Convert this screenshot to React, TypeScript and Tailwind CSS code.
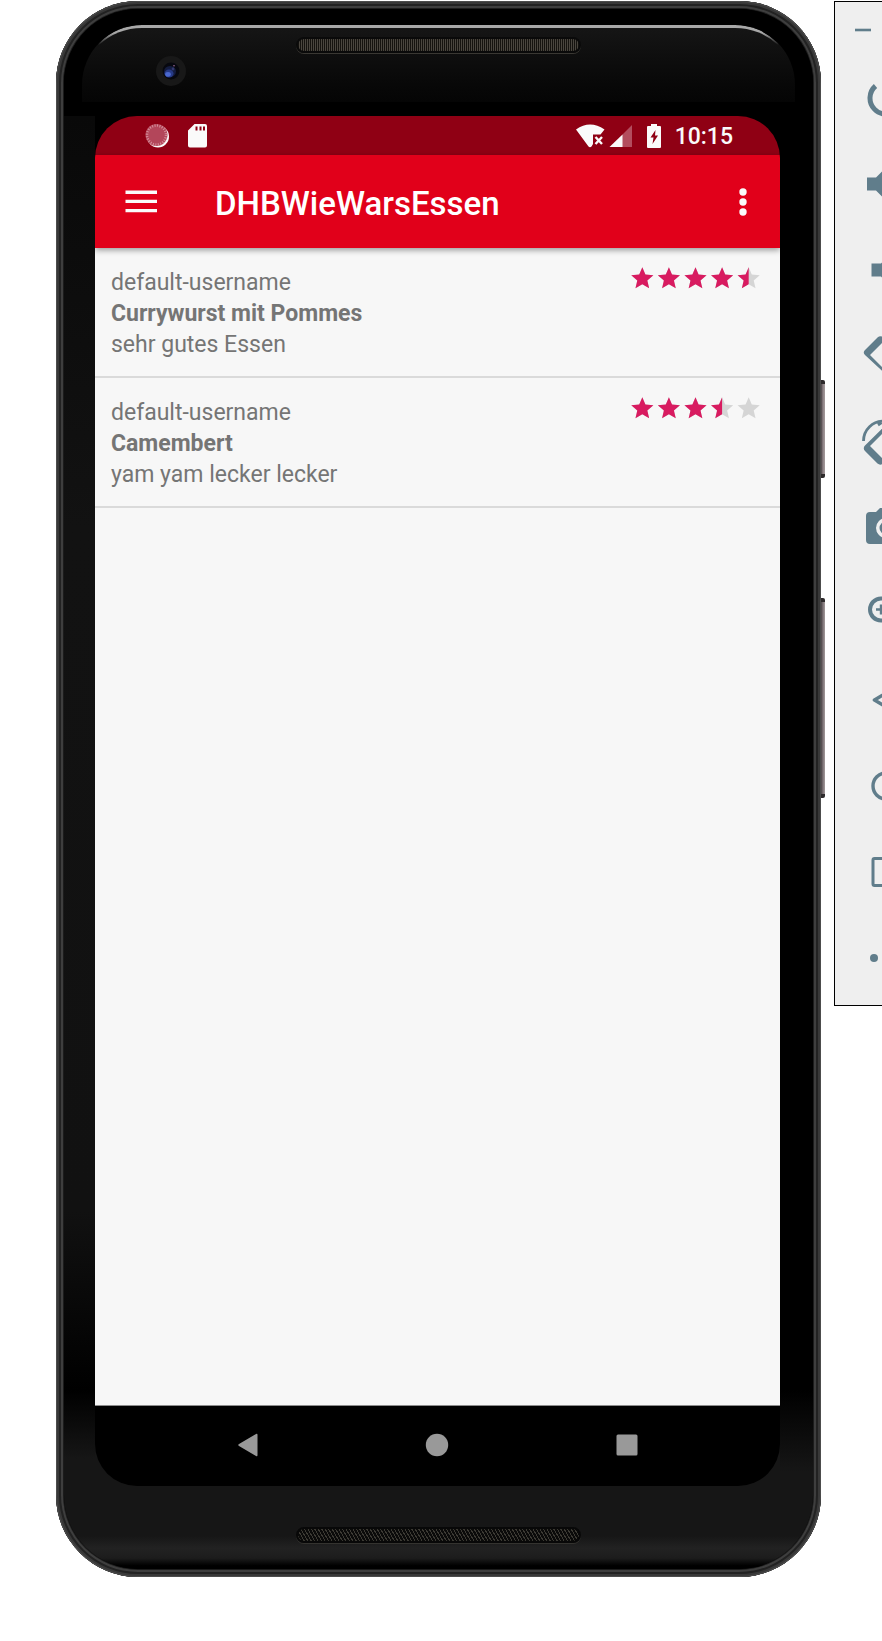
import type { ReactNode } from "react";

type Review = { user: string; dish: string; comment: string; rating: number };

const reviews: Review[] = [
  { user: "default-username", dish: "Currywurst mit Pommes", comment: "sehr gutes Essen", rating: 4.5 },
  { user: "default-username", dish: "Camembert", comment: "yam yam lecker lecker", rating: 3.5 },
];

const STAR = "M12 17.27L18.18 21l-1.64-7.03L22 9.24l-7.19-.61L12 2 9.19 8.63 2 9.24l5.46 4.73L5.82 21z";

function Stars({ rating, id }: { rating: number; id: string }) {
  const row = [0, 1, 2, 3, 4].map((i) => <path key={i} d={STAR} transform={`translate(${i * 24} 0)`} />);
  return (
    <svg viewBox="0 0 120 24" className="w-[133px] shrink-0" role="img" aria-label={`${rating} / 5`}>
      <clipPath id={id}>
        <rect width={rating * 24} height="24" />
      </clipPath>
      <g fill="#d5d5d5">{row}</g>
      <g fill="#d81b60" clipPath={`url(#${id})`}>{row}</g>
    </svg>
  );
}

function StatusBar() {
  return (
    <div className="flex h-[39px] items-center bg-[#8f0014] pr-[47px] pl-[50px] text-[#fafafa]">
      <svg viewBox="0 0 24 24" className="mr-[18px] size-6" aria-hidden="true">
        <circle cx="13" cy="12.500" r="11" fill="#fafafa" />
        <circle cx="11.500" cy="11" r="11" fill="#b3465a" />
        <circle cx="11.500" cy="11" r="9.500" fill="none" stroke="#d58f9b" strokeWidth="2.500" strokeDasharray="1 1.500" />
      </svg>
      <svg viewBox="0 0 20 24" className="h-6 w-5" aria-hidden="true">
        <path
          fill="currentColor"
          fillRule="evenodd"
          d="M7.500 0H18Q20 0 20 2V21.500Q20 23.500 18 23.500H3Q1 23.500 1 21.500V6.500ZM8.500 2.500V6.500H10.500V2.500ZM12.500 2.500V6.500H14.500V2.500ZM16 2.500V6.500H18V2.500Z"
        />
      </svg>
      <div className="ml-auto flex items-center">
        <svg viewBox="0 0 29 24" className="h-6 w-[29px]" aria-hidden="true">
          <path fill="currentColor" d="M0 5.500Q14 -4.500 28.500 5.500L24.500 10.500H17V20L15.500 22.500Q14 24 12.500 22.500Z" />
          <path d="M19.500 13l6.500 7M26 13l-6.500 7" stroke="currentColor" strokeWidth="2.400" />
        </svg>
        <svg viewBox="0 0 24 24" className="ml-1 size-6" aria-hidden="true">
          <path fill="#b34d5e" d="M23 1V23H13V11Z" />
          <path fill="currentColor" d="M13.500 10.500V23H0.500Z" />
        </svg>
        <svg viewBox="0 0 14 24" className="ml-[14px] h-6 w-[14px]" aria-hidden="true">
          <path
            fill="currentColor"
            fillRule="evenodd"
            d="M4 0H10V2H13Q14 2 14 3V23Q14 24 13 24H1Q0 24 0 23V3Q0 2 1 2H4ZM8.500 6L3.500 13.500H6.500L5.500 20L11 11.500H8Z"
          />
        </svg>
        <span className="ml-[14px] pt-0.5 text-[23px] leading-none font-medium">10:15</span>
      </div>
    </div>
  );
}

function AppBar() {
  return (
    <header className="relative z-10 flex h-[93px] items-center bg-[#e1001a] pr-[25px] pl-[30px] text-white shadow-[0_2px_6px_rgba(0,0,0,0.4)]">
      <button type="button" aria-label="Menu">
        <svg viewBox="0 0 32 24" className="h-6 w-8" aria-hidden="true">
          <path d="M0.500 2.200H32M0.500 11.400H32M0.500 20.600H32" stroke="#fafafa" strokeWidth="3.400" />
        </svg>
      </button>
      <h1 className="ml-[58px] pt-1 text-[33px] leading-[40px] font-medium">DHBWieWarsEssen</h1>
      <button type="button" aria-label="More options" className="ml-auto">
        <svg viewBox="0 0 24 28" className="h-7 w-6" aria-hidden="true" fill="#fafafa">
          <circle cx="12" cy="4" r="3.700" />
          <circle cx="12" cy="14" r="3.700" />
          <circle cx="12" cy="24" r="3.700" />
        </svg>
      </button>
    </header>
  );
}

function ReviewRow({ review, id }: { review: Review; id: string }) {
  return (
    <li className="flex items-start justify-between border-b-2 border-[#dadada] pt-[17px] pr-[18px] pb-4 pl-4 text-[23px] leading-[31px] text-[#757575]">
      <div className="pt-0.5">
        <p>{review.user}</p>
        <p className="font-bold">{review.dish}</p>
        <p>{review.comment}</p>
      </div>
      <Stars rating={review.rating} id={id} />
    </li>
  );
}

function NavBar() {
  return (
    <nav className="grid h-[81px] grid-cols-3 items-center justify-items-center border-t border-[#8c8c8c] bg-black px-[58px] pb-0.5">
      <button type="button" aria-label="Back">
        <svg viewBox="0 0 24 24" className="size-6" fill="#999" aria-hidden="true">
          <path d="M20 1Q21.500 0 21.500 2V22Q21.500 24 20 23L3 13Q1.500 12 3 11Z" />
        </svg>
      </button>
      <button type="button" aria-label="Home">
        <svg viewBox="0 0 24 24" className="size-6" fill="#999" aria-hidden="true">
          <circle cx="12" cy="12" r="11.200" />
        </svg>
      </button>
      <button type="button" aria-label="Overview">
        <svg viewBox="0 0 24 24" className="size-6" fill="#999" aria-hidden="true">
          <rect x="1.500" y="1.500" width="21" height="21" rx="1.500" />
        </svg>
      </button>
    </nav>
  );
}

const mesh =
  "bg-[repeating-linear-gradient(90deg,#15130f_0_1px,#4a463f_1px_2px),repeating-linear-gradient(0deg,#2a2824_0_1px,#3d3a34_1px_2px)]";
const darkMesh =
  "bg-[repeating-linear-gradient(60deg,#0b0b0a_0_2px,#3c3a33_2px_3px)]";

function Phone() {
  return (
    <div className="relative flex min-w-0 flex-1 flex-col rounded-[82px] bg-[#1c1c1c] p-2 shadow-[inset_0_0_0_1px_#4c4c4c,inset_0_0_0_3px_#383838,inset_0_0_0_5px_#222,inset_0_0_0_7px_#3e3e3e]">
      <div className="flex flex-1 flex-col overflow-hidden rounded-[74px] bg-black">
        <div className="relative h-[107px] shrink-0 bg-black">
          <div className="absolute inset-x-[18px] top-4 bottom-[14px] rounded-t-[60px] bg-linear-to-b from-[#161616] to-[#050505]" />
          <div className="absolute inset-x-[18px] top-4 bottom-[14px] rounded-t-[60px] border-t-[3px] border-[#a8a8a8] mask-[linear-gradient(#000_8px,transparent_20px)]" />
          <div className="relative pt-7">
            <div className={`mx-auto h-4 w-[38%] rounded-full border-2 border-[#0a0a0a] shadow-[0_1px_0_#3a3833] ${mesh}`} />
            <div className="mt-[3px] ml-[92px] grid size-[30px] place-items-center rounded-full bg-[#181818]">
              <svg viewBox="0 0 18 18" className="size-[18px]" aria-hidden="true">
                <circle cx="9" cy="9" r="8.500" fill="#07080f" />
                <ellipse cx="8" cy="9.500" rx="6" ry="5.500" fill="#141c40" />
                <ellipse cx="7" cy="11.500" rx="4.500" ry="4" fill="#263a86" />
                <ellipse cx="6" cy="12.300" rx="2.800" ry="2.400" fill="#4a68cf" />
                <circle cx="11" cy="7" r="1.400" fill="#33386e" />
                <circle cx="12" cy="3.800" r="0.800" fill="#a06a9a" />
              </svg>
            </div>
          </div>
        </div>
        <div className="flex flex-1 bg-linear-to-b from-black from-90% to-[#161616] to-97%">
          <div className="w-[31px] shrink-0 bg-[linear-gradient(#090909,#121212_30%,#111_80%,#000_93%,#161616_98%)]" />
          <div className="flex min-w-0 flex-1 flex-col overflow-hidden rounded-[42px]">
            <StatusBar />
            <AppBar />
            <ul className="flex-1 bg-[#f7f7f7]">
              {reviews.map((review, i) => (
                <ReviewRow key={review.dish} review={review} id={`rating-${i}`} />
              ))}
            </ul>
            <NavBar />
          </div>
          <div className="w-[33px] shrink-0 bg-[linear-gradient(#000_93%,#161616_99%)]" />
        </div>
        <div className="h-[83px] shrink-0 bg-[linear-gradient(#161616_60%,#222_75%,#1c1c1c_87%,#000_96%)] pt-[41px]">
          <div className={`mx-auto h-4 w-[38%] rounded-full border-2 border-[#080808] shadow-[0_1px_0_#34332f] ${darkMesh}`} />
        </div>
      </div>
      <div className="absolute top-[379px] left-full h-[98px] w-1 rounded-r-xs border-y-4 border-[#2d2a2b] bg-linear-to-r from-[#4a4346] via-[#8d8285] to-[#a59b9c]" />
      <div className="absolute top-[597px] left-full h-[200px] w-1 rounded-r-xs border-y-4 border-[#2d2a2b] bg-linear-to-r from-[#4a4346] via-[#7d7477] to-[#a59b9c]" />
    </div>
  );
}

const tools: { label: string; art: ReactNode }[] = [
  {
    label: "Power",
    art: <path d="M13.500 12A16 16 0 1 0 34.500 12M24 5V24" fill="none" stroke="currentColor" strokeWidth="5" />,
  },
  {
    label: "Volume up",
    art: (
      <>
        <path d="M5 17.500H14L24 7.500V40.500L14 30.500H5Z" fill="currentColor" />
        <path d="M29 15Q36 24 29 33M30 8Q46 24 30 40" fill="none" stroke="currentColor" strokeWidth="4" />
      </>
    ),
  },
  {
    label: "Volume down",
    art: (
      <>
        <path d="M9.500 17.500H19L28 8.500V39.500L19 30.500H9.500Z" fill="currentColor" />
        <path d="M33 15Q40 24 33 33" fill="none" stroke="currentColor" strokeWidth="4" />
      </>
    ),
  },
  {
    label: "Rotate left",
    art: (
      <path
        fill="currentColor"
        fillRule="evenodd"
        d="M15.500 5.500Q18.500 3 21.500 5.500L45 29Q47 31 45 33L32 46Q30 48 28 46L3 23Q0.500 20.500 3 18ZM8 23L26 41L40.500 26.500L22.500 8.500Z"
      />
    ),
  },
  {
    label: "Rotate right",
    art: (
      <>
        <path
          fill="currentColor"
          fillRule="evenodd"
          d="M28 3Q30 1 32 3L45 16Q47 18 45 20L21.500 45Q18.500 48 15.500 45.500L3 33Q0.500 30 3 27.500ZM8 28L22 42L40.500 23L26.500 9.500Z"
        />
        <path d="M1.500 23A20 20 0 0 1 22 3L16 7" fill="none" stroke="currentColor" strokeWidth="2.800" />
      </>
    ),
  },
  {
    label: "Screenshot",
    art: (
      <path
        fill="currentColor"
        fillRule="evenodd"
        d="M8 8H14L18 4H30L34 8H40Q44 8 44 12V36Q44 40 40 40H8Q4 40 4 36V12Q4 8 8 8ZM24 14A10 10 0 1 0 24 34A10 10 0 1 0 24 14ZM24 17.500A6.500 6.500 0 1 1 24 30.500A6.500 6.500 0 1 1 24 17.500Z"
      />
    ),
  },
  {
    label: "Zoom",
    art: (
      <g fill="none" stroke="currentColor">
        <circle cx="19" cy="19.500" r="11" strokeWidth="4" />
        <path d="M14 19.500H24M19 14.500V24.500" strokeWidth="2.400" />
        <path d="M28 28.500L39 39.500" strokeWidth="5" />
      </g>
    ),
  },
  {
    label: "Back",
    art: <path d="M12.500 24L35 10.500V37.500Z" fill="none" stroke="currentColor" strokeWidth="3.600" strokeLinejoin="round" />,
  },
  {
    label: "Home",
    art: <circle cx="24" cy="24" r="13" fill="none" stroke="currentColor" strokeWidth="3.400" />,
  },
  {
    label: "Overview",
    art: <rect x="11" y="10.500" width="27" height="27" rx="1.500" fill="none" stroke="currentColor" strokeWidth="3" />,
  },
  {
    label: "More",
    art: (
      <g fill="currentColor">
        <circle cx="12" cy="24" r="4" />
        <circle cx="25" cy="24" r="4" />
        <circle cx="38" cy="24" r="4" />
      </g>
    ),
  },
];

function EmulatorToolbar() {
  return (
    <aside className="ml-[13px] w-12 shrink-0 self-start overflow-hidden">
      <div className="w-[104px] border border-black bg-[#efefef] pb-1 text-[#607d8b]">
        <button type="button" aria-label="Minimize" className="flex h-[53px] w-14 items-center justify-center pt-0.5">
          <svg viewBox="0 0 16 4" className="h-1 w-4" aria-hidden="true">
            <path d="M0 2H16" stroke="currentColor" strokeWidth="2.600" />
          </svg>
        </button>
        {tools.map((tool) => (
          <button
            key={tool.label}
            type="button"
            aria-label={tool.label}
            className="flex h-[86px] w-full items-center justify-center"
          >
            <svg viewBox="0 0 48 48" className="size-12" aria-hidden="true">
              {tool.art}
            </svg>
          </button>
        ))}
      </div>
    </aside>
  );
}

export default function App() {
  return (
    <main className="flex min-h-screen overflow-hidden bg-white pt-px pb-16 pl-14 font-[Roboto,sans-serif]">
      <Phone />
      <EmulatorToolbar />
    </main>
  );
}
